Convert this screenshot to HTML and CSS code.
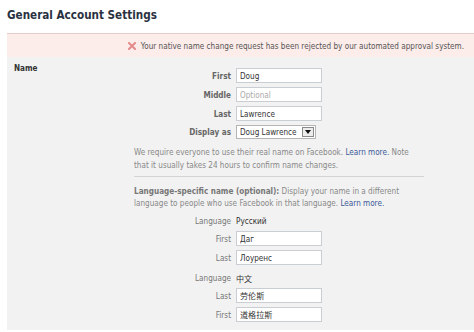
FILE: index.html
```html
<!DOCTYPE html>
<html lang="en">
<head>
	<meta charset="utf-8" />
	<title>General Account Settings</title>
	<link rel="stylesheet" href="styles.css">
</head>
<body>
	<h1 class="pageTitle">General Account Settings</h1>

	<div class="notice">
		<svg class="noticeIcon" width="8" height="8" viewBox="0 0 8 8">
			<path d="M1 1 L7 7 M7 1 L1 7" stroke="#e48a8a" stroke-width="2" stroke-linecap="square"/>
		</svg>
		<span>Your native name change request has been rejected by our automated approval system.</span>
	</div>

	<div class="panel">
		<div class="sectionTitle">Name</div>
		<div class="form">
			<div class="fields">
				<label class="label">First</label>
				<input class="field" type="text" value="Doug">
				<label class="label">Middle</label>
				<input class="field" type="text" placeholder="Optional">
				<label class="label">Last</label>
				<input class="field" type="text" value="Lawrence">
				<label class="label">Display as</label>
				<div class="select">
					<span class="selectText">Doug Lawrence</span>
					<span class="selectArrow"></span>
				</div>
			</div>

			<p class="help">We require everyone to use their real name on Facebook. <a href="#">Learn more.</a> Note that it usually takes 24 hours to confirm name changes.</p>

			<hr class="sep">

			<p class="help langHelp"><b>Language-specific name (optional):</b> Display your name in a different language to people who use Facebook in that language. <a href="#">Learn more.</a></p>

			<div class="fields langFields">
				<span class="label light">Language</span>
				<span class="value">Русский</span>
				<label class="label light">First</label>
				<input class="field" type="text" value="Даг">
				<label class="label light">Last</label>
				<input class="field" type="text" value="Лоуренс">
			</div>

			<div class="fields langFields second">
				<span class="label light">Language</span>
				<span class="value">中文</span>
				<label class="label light">Last</label>
				<input class="field" type="text" value="劳伦斯">
				<label class="label light">First</label>
				<input class="field" type="text" value="道格拉斯">
			</div>
		</div>
	</div>
</body>
</html>
```

FILE: styles.css
```css
body{
	margin: 0;
	background: #ffffff;
	font-family: "DejaVu Sans Condensed", "DejaVu Sans", "Noto Sans CJK SC", sans-serif;
	font-size: 8.1px;
	color: #333333;
}

.pageTitle{
	margin: 0;
	height: 33px;
	box-sizing: border-box;
	padding: 8px 0 0 7px;
	font-size: 11.6px;
	font-weight: bold;
	color: #2a3242;
}

/* error bar */
.notice{
	margin-left: 7px;
	height: 24px;
	box-sizing: border-box;
	border-top: 1px solid #e5cdca;
	background: #fcecea;
	display: flex;
	align-items: center;
	justify-content: flex-end;
	gap: 5px;
	padding-right: 10px;
	color: #555555;
}

.panel{
	margin-left: 7px;
	height: 273px;
	box-sizing: border-box;
	background: #f2f2f2;
	display: flex;
	padding: 6px 0 0 7px;
}

.sectionTitle{
	width: 120px;
	font-weight: bold;
	line-height: 10px;
	color: #333333;
}

.form{
	width: 290px;
	padding-top: 5px;
}

.fields{
	display: grid;
	grid-template-columns: 97px 86px;
	column-gap: 5px;
	row-gap: 4px;
	align-items: center;
}

.label{
	text-align: right;
	font-weight: bold;
	color: #666666;
}

.label.light{
	font-weight: normal;
	color: #777777;
}

.value{
	color: #333333;
}

.field{
	width: 86px;
	height: 15px;
	box-sizing: border-box;
	margin: 0;
	border: 1px solid #c9cdd4;
	padding: 0 3px;
	background: #ffffff;
	font: inherit;
	color: #333333;
	outline: none;
}

.field::placeholder{
	color: #aaaaaa;
}

.select{
	width: 80px;
	height: 14px;
	box-sizing: border-box;
	border: 1px solid #b5b5b5;
	background: #ffffff;
	display: flex;
	align-items: center;
	justify-content: space-between;
	padding: 0 1px 0 3px;
}

.selectArrow{
	width: 12px;
	height: 10px;
	box-sizing: border-box;
	border: 1px solid #8a8a8a;
	background: #ececec;
	position: relative;
}

.selectArrow::after{
	content: "";
	position: absolute;
	left: 2px;
	top: 2px;
	border-left: 3px solid transparent;
	border-right: 3px solid transparent;
	border-top: 4px solid #111111;
}

.help{
	margin: 7px 0 0 0;
	line-height: 13px;
	color: #888888;
}

.help a{
	color: #3b5998;
	text-decoration: none;
}

.help b{
	color: #777777;
}

.sep{
	margin: 4px 0 0 0;
	border: 0;
	border-top: 1px solid #d4d4d4;
	height: 0;
}

.langHelp{
	margin-top: 8px;
	line-height: 12px;
}

.langFields{
	margin-top: 6px;
	grid-template-rows: 12px 15px 15px;
}

.langFields.second{
	margin-top: 7px;
}
```
